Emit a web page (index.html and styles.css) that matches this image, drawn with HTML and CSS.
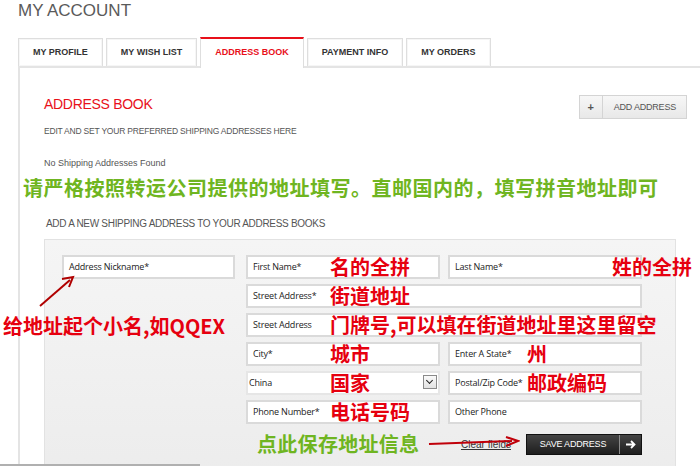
FILE: index.html
```html
<!DOCTYPE html>
<html lang="en">
<head>
    <meta charset="UTF-8">
    <title>My Account - Address Book</title>
    <link rel="stylesheet" href="styles.css">
</head>
<body>
    <h1 class="page-title">MY ACCOUNT</h1>

    <ul class="tabs">
        <li class="tab">MY PROFILE</li>
        <li class="tab">MY WISH LIST</li>
        <li class="tab active">ADDRESS BOOK</li>
        <li class="tab">PAYMENT INFO</li>
        <li class="tab">MY ORDERS</li>
    </ul>

    <div class="tab-content">
        <div class="section-head">
            <div>
                <h2 class="section-title">ADDRESS BOOK</h2>
                <p class="section-sub">EDIT AND SET YOUR PREFERRED SHIPPING ADDRESSES HERE</p>
            </div>
            <button class="add-btn"><span class="add-plus">+</span><span class="add-label">ADD ADDRESS</span></button>
        </div>

        <p class="empty-note">No Shipping Addresses Found</p>
        <p class="note-green">请严格按照转运公司提供的地址填写。直邮国内的，填写拼音地址即可</p>

        <h3 class="form-title">ADD A NEW SHIPPING ADDRESS TO YOUR ADDRESS BOOKS</h3>

        <div class="form-panel">
            <div class="form-grid">
                <div class="field nickname">Address Nickname*</div>
                <div class="field">First Name*<span class="tip">名的全拼</span></div>
                <div class="field">Last Name*<span class="tip tip-far">姓的全拼</span></div>

                <div class="field wide">Street Address*<span class="tip">街道地址</span></div>
                <div class="field wide">Street Address<span class="tip">门牌号,可以填在街道地址里这里留空</span></div>

                <div class="field">City*<span class="tip">城市</span></div>
                <div class="field">Enter A State*<span class="tip tip-right">州</span></div>

                <div class="field select">China<span class="tip">国家</span><span class="select-arrow"></span></div>
                <div class="field">Postal/Zip Code*<span class="tip tip-right">邮政编码</span></div>

                <div class="field">Phone Number*<span class="tip">电话号码</span></div>
                <div class="field">Other Phone</div>
            </div>

            <div class="form-actions">
                <span class="save-tip">点此保存地址信息</span>
                <svg class="save-arrow" width="92" height="12" viewBox="0 0 92 12">
                    <line x1="1" y1="8" x2="84" y2="5" stroke="#c0000a" stroke-width="2"/>
                    <path d="M78 1 L90 5 L78 10" fill="none" stroke="#c0000a" stroke-width="2"/>
                </svg>
                <a class="clear-link" href="#">Clear fields</a>
                <button class="save-btn">
                    <span class="save-label">SAVE ADDRESS</span>
                    <span class="save-go">
                        <svg width="10" height="9" viewBox="0 0 10 9">
                            <path d="M0 4.5 H8 M5 1 L8.5 4.5 L5 8" fill="none" stroke="#fff" stroke-width="1.8"/>
                        </svg>
                    </span>
                </button>
            </div>

            <span class="nick-tip">给地址起个小名,如QQEX</span>
            <svg class="nick-arrow" width="44" height="36" viewBox="0 0 44 36">
                <line x1="4" y1="32" x2="34" y2="6" stroke="#b00000" stroke-width="2"/>
                <path d="M26 5 L37 3 L33 13" fill="none" stroke="#b00000" stroke-width="2"/>
            </svg>
        </div>
    </div>

    <div class="scroll-thumb"></div>
</body>
</html>
```

FILE: styles.css
```css
html {
    overflow: hidden;
}
body {
    margin: 0;
    font-family: "Liberation Sans", Arial, sans-serif;
    color: #555;
    background: #fff;
}
.page-title {
    margin: 0 0 0 18px;
    font-size: 17px;
    line-height: 22px;
    font-weight: normal;
    color: #5a5a5a;
}
.tabs {
    display: flex;
    align-items: flex-end;
    gap: 3px;
    list-style: none;
    margin: 15px 0 0 18px;
    padding: 0;
    border-bottom: 2px solid #e4e4e4;
}
.tab {
    height: 28px;
    box-sizing: border-box;
    padding: 0 14px;
    border: 1px solid #dedede;
    border-bottom: none;
    box-shadow: inset 0 0 0 1px #f6f6f6;
    background: #fff;
    font-size: 9px;
    font-weight: bold;
    line-height: 27px;
    color: #333;
}
.tab.active {
    height: 31px;
    margin-bottom: -2px;
    padding: 0 14px;
    border-top: 2px solid #e8101a;
    line-height: 27px;
    color: #e8101a;
    box-shadow: none;
}
.tab-content {
    margin-left: 18px;
    padding: 28px 13px 0 24px;
    border-left: 2px solid #e4e4e4;
}
.section-head {
    display: flex;
    justify-content: space-between;
    align-items: flex-start;
}
.section-title {
    margin: 0;
    font-size: 14px;
    line-height: 16px;
    font-weight: normal;
    letter-spacing: -0.3px;
    color: #e8101a;
}
.section-sub {
    margin: 14px 0 0;
    font-size: 8.5px;
    line-height: 10px;
    letter-spacing: -0.2px;
    color: #555;
}
.add-btn {
    display: flex;
    height: 24px;
    margin-top: -1px;
    padding: 0;
    border: 1px solid #d4d4d4;
    background: linear-gradient(#f7f7f7, #e8e8e8);
    font-family: "Liberation Sans", Arial, sans-serif;
    color: #555;
}
.add-plus {
    width: 22px;
    border-right: 1px solid #d4d4d4;
    font-size: 11px;
    font-weight: bold;
    line-height: 22px;
}
.add-label {
    padding: 0 10px 0 11px;
    font-size: 9px;
    line-height: 22px;
    letter-spacing: -0.2px;
}
.empty-note {
    margin: 22px 0 0;
    font-size: 9px;
    line-height: 11px;
    color: #555;
}
.note-green {
    margin: 7px 0 0 -21px;
    font-family: "Noto Sans CJK SC", sans-serif;
    font-size: 20px;
    font-weight: bold;
    line-height: 24px;
    letter-spacing: 0.5px;
    color: #6fb521;
}
.form-title {
    margin: 18px 0 0 2px;
    font-size: 10px;
    line-height: 12px;
    font-weight: normal;
    letter-spacing: -0.3px;
    color: #555;
}
.form-panel {
    position: relative;
    width: 632px;
    box-sizing: border-box;
    margin-top: 9px;
    padding: 15px 17px 30px;
    border: 1px solid #e2e2e2;
    background: linear-gradient(#f5f5f5, #ececec);
}
.form-grid {
    display: grid;
    grid-template-columns: 176px 194px 194px;
    grid-auto-rows: 24px;
    column-gap: 8px;
    row-gap: 5px;
}
.field {
    position: relative;
    box-sizing: border-box;
    padding-left: 5px;
    border: 2px solid #dadada;
    background: #fff;
    font-family: "Open Sans", sans-serif;
    font-size: 9px;
    line-height: 20px;
    letter-spacing: -0.2px;
    color: #222;
}
.field.nickname {
    width: 173px;
    grid-row: span 6;
    height: 24px;
}
.field.wide {
    grid-column: span 2;
}
.field.select {
    padding-left: 1px;
    border-color: #e6e6e6;
}
.select-arrow {
    position: absolute;
    right: 1px;
    top: 2px;
    width: 12px;
    height: 12px;
    border: 1px solid #8a8a8a;
    background: linear-gradient(#fafafa, #e2e2e2);
}
.select-arrow::after {
    content: "";
    position: absolute;
    left: 3px;
    top: 2px;
    width: 4px;
    height: 4px;
    border-right: 1.5px solid #222;
    border-bottom: 1.5px solid #222;
    transform: rotate(45deg);
}
.tip {
    position: absolute;
    left: 82px;
    top: -2px;
    font-family: "Noto Sans CJK SC", sans-serif;
    font-size: 20px;
    font-weight: bold;
    line-height: 24px;
    letter-spacing: 0;
    white-space: nowrap;
    color: #e6000f;
}
.tip-right {
    left: 77px;
}
.tip-far {
    left: 162px;
}
.nick-tip {
    position: absolute;
    left: -42px;
    top: 74px;
    font-family: "Noto Sans CJK SC", sans-serif;
    font-size: 20px;
    font-weight: bold;
    line-height: 24px;
    white-space: nowrap;
    color: #e6000f;
}
.nick-arrow {
    position: absolute;
    left: -9px;
    top: 34px;
}
.form-actions {
    position: relative;
    display: flex;
    justify-content: flex-end;
    align-items: center;
    width: 580px;
    margin-top: 10px;
}
.save-tip {
    position: absolute;
    left: 195px;
    top: -2px;
    font-family: "Noto Sans CJK SC", sans-serif;
    font-size: 20px;
    font-weight: bold;
    line-height: 24px;
    letter-spacing: 0.3px;
    color: #6fb521;
}
.save-arrow {
    position: absolute;
    left: 366px;
    top: 2px;
}
.clear-link {
    margin-right: 15px;
    font-size: 10px;
    color: #333;
}
.save-btn {
    display: flex;
    height: 21px;
    padding: 0;
    border: 1px solid #111;
    background: linear-gradient(#444, #1e1e1e);
    font-family: "Liberation Sans", Arial, sans-serif;
    color: #fff;
}
.save-label {
    width: 92px;
    font-size: 9px;
    line-height: 19px;
    letter-spacing: -0.2px;
}
.save-go {
    display: flex;
    align-items: center;
    justify-content: center;
    width: 21px;
    height: 19px;
    border-left: 1px solid #8a8a8a;
}
.scroll-thumb {
    position: fixed;
    left: 0;
    bottom: 0;
    width: 200px;
    height: 2px;
    background: #b0b0b0;
}
```
